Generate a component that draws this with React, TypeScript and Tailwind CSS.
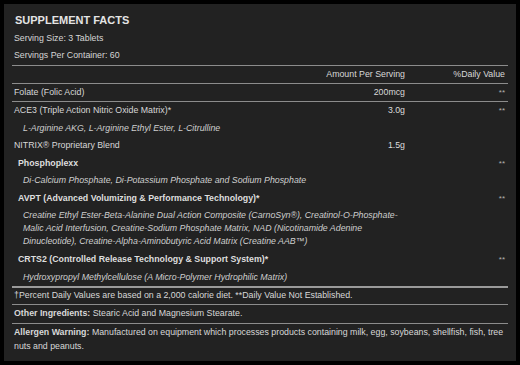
import type { ReactNode } from "react";

type Kind = "plain" | "bold" | "sub";

interface Item {
  name: ReactNode;
  kind: Kind;
  amount?: string;
  dv?: string;
}

const items: Item[] = [
  { name: "ACE3 (Triple Action Nitric Oxide Matrix)*", kind: "plain", amount: "3.0g", dv: "**" },
  { name: "L-Arginine AKG, L-Arginine Ethyl Ester, L-Citrulline", kind: "sub" },
  { name: "NITRIX® Proprietary Blend", kind: "plain", amount: "1.5g" },
  { name: "Phosphoplexx", kind: "bold", dv: "**" },
  { name: "Di-Calcium Phosphate, Di-Potassium Phosphate and Sodium Phosphate", kind: "sub" },
  { name: "AVPT (Advanced Volumizing & Performance Technology)*", kind: "bold", dv: "**" },
  {
    name: (
      <>
        Creatine Ethyl Ester-Beta-Alanine Dual Action Composite (CarnoSyn®), Creatinol-O-Phosphate-
        <br />
        Malic Acid Interfusion, Creatine-Sodium Phosphate Matrix, NAD (Nicotinamide Adenine
        <br />
        Dinucleotide), Creatine-Alpha-Aminobutyric Acid Matrix (Creatine AAB™)
      </>
    ),
    kind: "sub",
  },
  { name: "CRTS2 (Controlled Release Technology & Support System)*", kind: "bold", dv: "**" },
  { name: "Hydroxypropyl Methylcellulose (A Micro-Polymer Hydrophilic Matrix)", kind: "sub" },
];

const nameClass: Record<Kind, string> = {
  plain: "text-[#d8d8d8]",
  bold: "pl-[4px] font-bold text-[#dedede]",
  sub: "col-span-3 pl-[9px] italic text-[#cfcfcf]",
};

function Row({ item }: { item: Item }) {
  return (
    <div className="grid grid-cols-[1fr_130px_100px] py-[2.28px] leading-[13px]">
      <div className={`whitespace-nowrap ${nameClass[item.kind]}`}>{item.name}</div>
      {item.kind !== "sub" && (
        <>
          <div className="text-right text-[#dcdcdc]">{item.amount}</div>
          <div className="text-right text-[8px] text-[#b0b0b0]">{item.dv}</div>
        </>
      )}
    </div>
  );
}

export default function App() {
  return (
    <div className="h-[365px] w-[520px] bg-black p-[4px] font-['Liberation_Sans',Arial,sans-serif] text-[8.8px]">
      <div className="h-[357px] w-[512px] bg-[#222222] px-[8px] pt-[9px]">
        <div className="px-[3px] text-[11px] font-bold leading-[14px] text-[#e4e4e4]">SUPPLEMENT FACTS</div>
        <div className="mt-[2.5px] px-[2px] leading-[17px] text-[#d6d6d6]">
          <div>Serving Size: 3 Tablets</div>
          <div>Servings Per Container: 60</div>
        </div>

        <div className="mt-[1.5px] border-t border-[#8c8c8c]" />
        <div className="grid h-[17px] grid-cols-[1fr_130px_100px] items-center pl-[2px] pr-[3px] text-[#d8d8d8]">
          <div />
          <div className="text-right">Amount Per Serving</div>
          <div className="text-right">%Daily Value</div>
        </div>
        <div className="border-t border-[#8c8c8c]" />
        <div className="grid h-[17px] grid-cols-[1fr_130px_100px] items-center pl-[2px] pr-[3px] text-[#d8d8d8]">
          <div>Folate (Folic Acid)</div>
          <div className="text-right">200mcg</div>
          <div className="text-right text-[8px] text-[#b0b0b0]">**</div>
        </div>
        <div className="border-t border-[#8c8c8c]" />

        <div className="pl-[2px] pr-[3px]">
          {items.map((item, i) => (
            <Row key={i} item={item} />
          ))}
        </div>

        <div className="border-t-2 border-[#9a9a9a]" />
        <div className="flex h-[16px] items-center px-[2px] text-[#d8d8d8]">
          †Percent Daily Values are based on a 2,000 calorie diet. **Daily Value Not Established.
        </div>
        <div className="border-t border-[#8c8c8c]" />
        <div className="flex h-[18px] items-center px-[2px] text-[#d8d8d8]">
          <span className="font-bold">Other Ingredients:</span>&nbsp;Stearic Acid and Magnesium Stearate.
        </div>
        <div className="border-t border-[#8c8c8c]" />
        <div className="px-[2px] pt-[1px] leading-[14px] text-[#d8d8d8]">
          <div className="whitespace-nowrap">
            <span className="font-bold">Allergen Warning:</span> Manufactured on equipment which processes
            products containing milk, egg, soybeans, shellfish, fish, tree
          </div>
          <div>nuts and peanuts.</div>
        </div>
      </div>
    </div>
  );
}
